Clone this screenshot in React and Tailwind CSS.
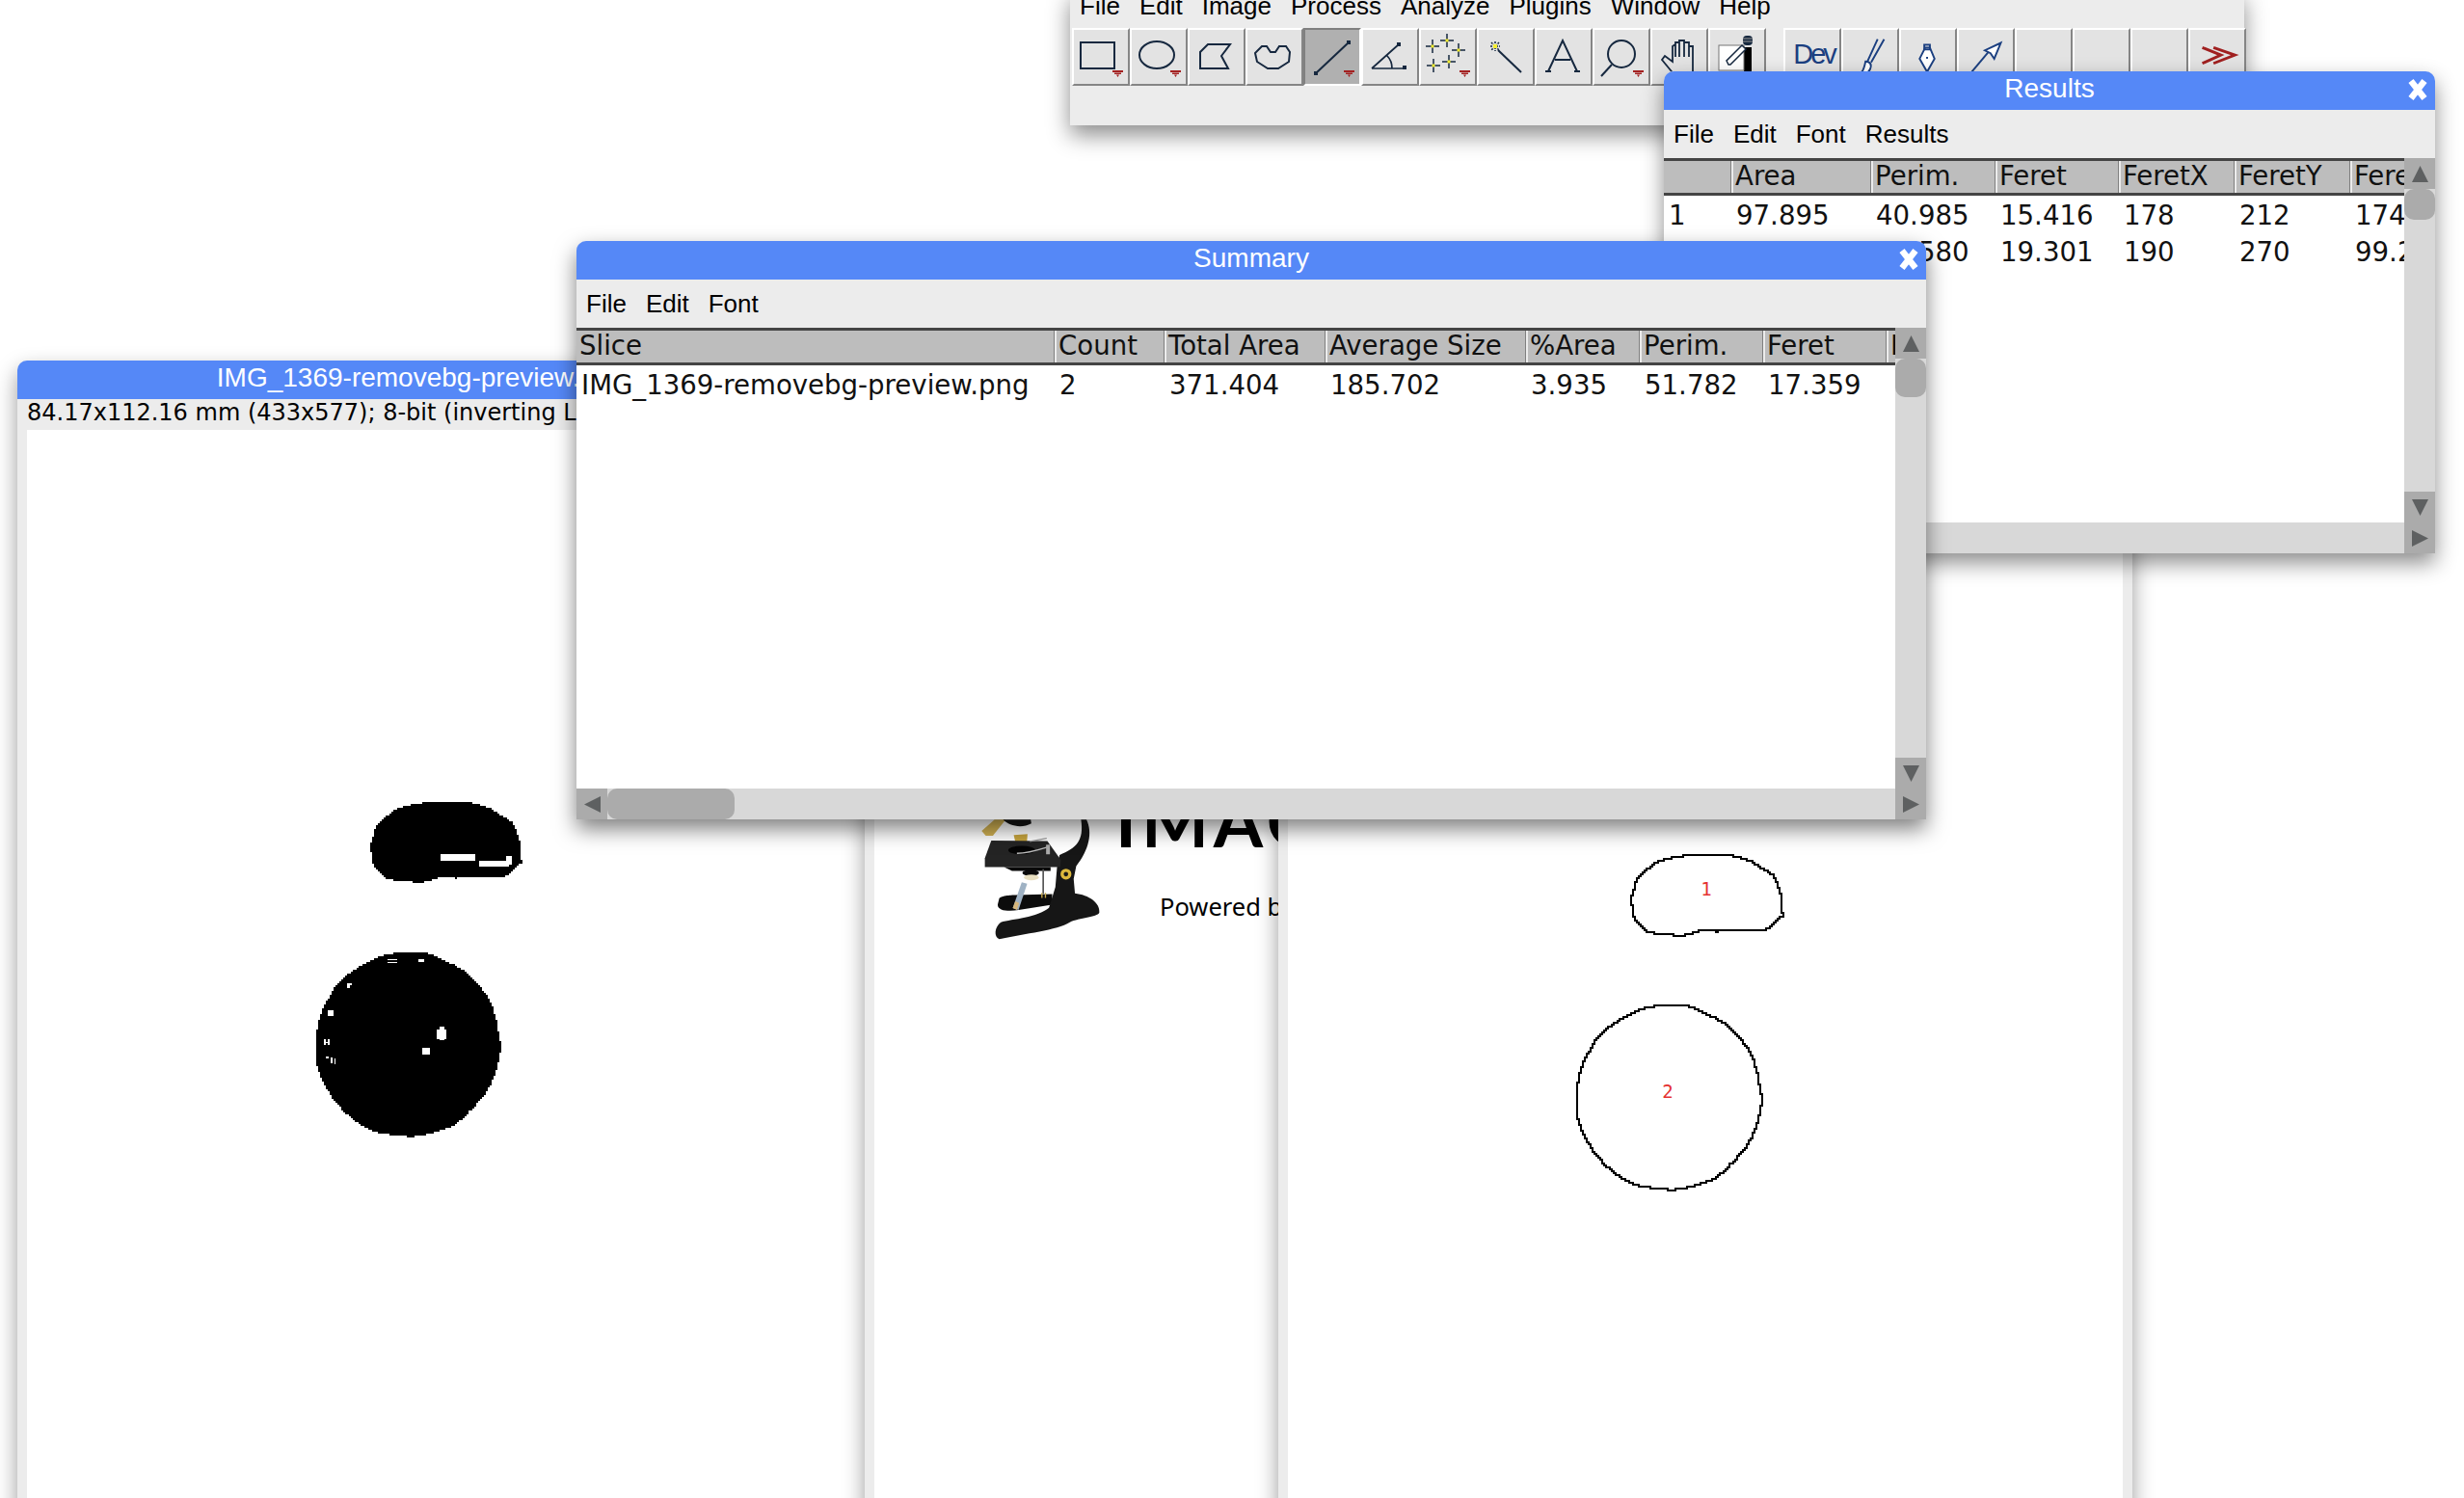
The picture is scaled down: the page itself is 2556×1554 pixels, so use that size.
const ink = "#16283f";

// turn a polygon into the stair-stepped outline of a low-res thresholded image
function stairs(pts, cell = 2) {
  let d = "";
  let px = null;
  let py = null;
  const list = [...pts, pts[0]];
  for (let i = 0; i < list.length - 1; i++) {
    const [ax, ay] = list[i];
    const [bx, by] = list[i + 1];
    const n = Math.max(1, Math.ceil(Math.hypot(bx - ax, by - ay) / cell));
    for (let s = 0; s <= n; s++) {
      const x = Math.round((ax + ((bx - ax) * s) / n) / cell) * cell;
      const y = Math.round((ay + ((by - ay) * s) / n) / cell) * cell;
      if (px === null) d += `M${x} ${y}`;
      else {
        if (x !== px) d += `H${x}`;
        if (y !== py) d += `V${y}`;
      }
      px = x;
      py = y;
    }
  }
  return d + "Z";
}

const beanPts = [
  [465, 80], [580, 80], [650, 100], [725, 150], [745, 210], [750, 272], [700, 315], [550, 318],
  [515, 314], [500, 315], [440, 332], [360, 325], [330, 320], [290, 282], [278, 215], [295, 155], [350, 105], [410, 88],
].map(([x, y]) => [263.3 + x / 3, 359 + y / 3]);

const circlePts = Array.from({ length: 96 }, (_, i) => {
  const a = (i / 96) * Math.PI * 2;
  const r = 95.8 + Math.sin(a * 7) * 0.5 + Math.sin(a * 13 + 1) * 0.5;
  return [395 + Math.cos(a) * r, 637.5 + Math.sin(a) * r];
});

const specks = [
  [470, 258, 110, 20], [590, 278, 95, 20], [675, 265, 18, 25], [305, 585, 30, 4], [305, 593, 30, 5], [402, 585, 18, 8],
  [180, 660, 8, 15], [180, 660, 15, 6], [120, 745, 18, 16], [108, 835, 6, 16], [120, 835, 6, 16], [108, 842, 16, 4],
  [115, 888, 8, 6], [130, 890, 5, 20], [140, 895, 5, 18], [460, 805, 28, 30], [468, 796, 14, 40], [415, 860, 22, 22],
].map(([x, y, w, h]) => [272 + x / 3, 354 + y / 3, w / 3, h / 3]);

function ThresholdImage() {
  return (
    <svg className="block w-[869px] h-[1000px]" viewBox="0 0 869 1000" shapeRendering="crispEdges">
      <path d={stairs(beanPts)} fill="#000" />
      <path d={stairs(circlePts)} fill="#000" />
      {specks.map(([x, y, w, h], i) => (
        <rect key={i} x={x} y={y} width={w} height={h} fill="#fff" />
      ))}
    </svg>
  );
}

function OutlineImage() {
  return (
    <svg className="block w-[866px] h-[1000px]" viewBox="0 0 866 1000">
      <path d={stairs(beanPts)} fill="none" stroke="#000" strokeWidth="2" shapeRendering="crispEdges" />
      <path d={stairs(circlePts)} fill="none" stroke="#000" strokeWidth="2" shapeRendering="crispEdges" />
      <text x="434" y="421" textAnchor="middle" dominantBaseline="central" fontFamily="DejaVu Sans Mono" fontSize="19" fill="#e53232">1</text>
      <text x="394" y="631" textAnchor="middle" dominantBaseline="central" fontFamily="DejaVu Sans Mono" fontSize="19" fill="#e53232">2</text>
    </svg>
  );
}

function Microscope() {
  return (
    <svg className="block w-[133px] h-[127px] shrink-0" viewBox="0 30 400 380">
      <path d="M80 275C90 265 130 265 130 265L245 262L245 295L140 312C110 317 75 315 75 295Z" fill="#0c0c0c" />
      <path d="M268 140C320 120 345 95 335 30L352 30C372 70 360 125 320 175L312 215L316 260C360 265 395 290 392 320C385 335 330 335 300 350C260 375 160 385 80 403C62 395 65 365 85 350C120 340 200 335 235 305L255 240L260 180Z" fill="#161616" />
      <path d="M25 65L65 30L100 30L60 80L38 80Z" fill="#d2b253" />
      <path d="M125 78L168 75L165 118L135 120Z" fill="#c7a53e" />
      <path d="M92 30C110 50 150 58 180 42L178 30Z" fill="#141414" />
      <path d="M55 95L230 97L272 155L270 178L35 178L35 150Z" fill="#242424" />
      <ellipse cx="150" cy="125" rx="42" ry="13" fill="#050505" />
      <path d="M135 135C170 135 200 125 232 115" stroke="#bdbdbd" strokeWidth="4" fill="none" />
      <path d="M175 98L228 88" stroke="#9a9a9a" strokeWidth="4" fill="none" />
      <rect x="226" y="108" width="12" height="30" fill="#aaa" />
      <path d="M95 178L240 178L240 190L120 190Z" fill="#0a0a0a" />
      <ellipse cx="178" cy="196" rx="26" ry="10" fill="#0a0a0a" />
      <ellipse cx="180" cy="210" rx="23" ry="9" fill="#e8dfc0" />
      <path d="M150 225L167 230L140 312L122 306Z" fill="#9fb2c4" />
      <path d="M122 306L130 285L142 290L135 312Z" fill="#d6b77c" />
      <path d="M217 185L217 262" stroke="#555" strokeWidth="5" />
      <path d="M213 258L213 274M224 258L224 274" stroke="#c9a94a" strokeWidth="4" />
      <circle cx="288" cy="200" r="17" fill="#dcb83c" />
      <circle cx="288" cy="200" r="7" fill="#1a1a1a" />
    </svg>
  );
}

function Arrow({ dir }) {
  const pts = {
    up: "8.5,0 17,17 0,17",
    down: "0,0 17,0 8.5,17",
    left: "17,0 17,17 0,8.5",
    right: "0,0 17,8.5 0,17",
  };
  return (
    <svg className="w-[17px] h-[17px]" viewBox="0 0 17 17">
      <polygon points={pts[dir]} fill="#5e6061" />
    </svg>
  );
}

function ScrollButton({ dir }) {
  return (
    <div className="w-8 h-8 shrink-0 bg-[#ababab] flex items-center justify-center">
      <Arrow dir={dir} />
    </div>
  );
}

function Close() {
  return (
    <svg className="absolute right-[7px] top-[6px] w-[22px] h-[26px]" viewBox="0 0 22 26">
      <path d="M4 4L18 22M18 4L4 22" stroke="#fff" strokeWidth="6.5" />
    </svg>
  );
}

function TitleBar({ title, close }) {
  return (
    <div className="relative h-10 shrink-0 bg-[#5588f7] rounded-t-[10px] flex justify-center pt-[2px] text-[28px] leading-[32px] text-white whitespace-nowrap overflow-hidden">
      {title}
      {close && <Close />}
    </div>
  );
}

function MenuBar({ items }) {
  return (
    <div className="h-[50px] shrink-0 bg-[#ececec] flex items-center gap-5 px-[10px] pt-[1px] text-[26px] text-black">
      {items.map((m) => (
        <span key={m}>{m}</span>
      ))}
    </div>
  );
}

function HeaderCell({ className, first, children }) {
  return (
    <div className={`${className} shrink-0 h-full whitespace-nowrap ${first ? "pl-[3px]" : "pl-[2px] border-l-2 border-l-[#ececec] shadow-[-1px_0_0_#808080]"}`}>
      {children}
    </div>
  );
}

function TextWindowBody({ header, rows, thumbClass, vThumbClass }) {
  return (
    <div className="flex-1 min-h-0 flex">
      <div className="flex-1 min-w-0 flex flex-col">
        <div className="flex-1 min-h-0 overflow-hidden bg-white font-['DejaVu_Sans',sans-serif] text-[27.6px] text-[#111]">
          <div className="h-[39px] flex items-center bg-[#bdbdbd] border-y-[3px] border-[#444] leading-[31px]">
            {header.map(([label, cls], i) => (
              <HeaderCell key={i} className={cls} first={i === 0}>{label}</HeaderCell>
            ))}
          </div>
          {rows.map((row, r) => (
            <div key={r} className="h-[38px] flex items-center pt-[4px] leading-[34px]">
              {row.map((v, i) => (
                <div key={i} className={`${header[i][1]} shrink-0 pl-[5px] whitespace-nowrap`}>{v}</div>
              ))}
            </div>
          ))}
        </div>
        <div className="h-8 shrink-0 flex bg-[#d8d8d8]">
          <ScrollButton dir="left" />
          <div className={`${thumbClass} h-8 bg-[#ababab] rounded-[10px]`} />
        </div>
      </div>
      <div className="w-8 shrink-0 flex flex-col bg-[#d8d8d8]">
        <ScrollButton dir="up" />
        <div className={`${vThumbClass} w-8 bg-[#ababab] rounded-[10px]`} />
        <div className="flex-1" />
        <ScrollButton dir="down" />
        <ScrollButton dir="right" />
      </div>
    </div>
  );
}

const summaryHeader = [
  ["Slice", "w-[496px]"],
  ["Count", "w-[114px]"],
  ["Total Area", "w-[167px]"],
  ["Average Size", "w-[208px]"],
  ["%Area", "w-[118px]"],
  ["Perim.", "w-[128px]"],
  ["Feret", "w-[128px]"],
  ["FeretX", "w-[120px]"],
];

const resultsHeader = [
  ["", "w-[70px]"],
  ["Area", "w-[145px]"],
  ["Perim.", "w-[129px]"],
  ["Feret", "w-[128px]"],
  ["FeretX", "w-[120px]"],
  ["FeretY", "w-[120px]"],
  ["FeretAngle", "w-[160px]"],
];

function TriMark() {
  return <path d="M43 44H54V46H43ZM45 46.500H52V48H45ZM47 48.500H50L48.500 51Z" fill="#a32020" />;
}

function Corner({ x, y }) {
  return <rect x={x - 2} y={y - 2} width="4" height="4" fill={ink} />;
}

function Star({ x, y }) {
  return (
    <g>
      <path d={`M${x - 7} ${y}H${x + 7}M${x} ${y - 7}V${y + 7}`} stroke={ink} strokeWidth="1.5" />
      <rect x={x - 1.500} y={y - 1.500} width="3" height="3" fill="#f4ee30" />
    </g>
  );
}

const stroke = { fill: "none", stroke: ink, strokeWidth: 2 };

const tools = [
  <g key="rect"><rect x="10" y="15" width="35" height="27" {...stroke} /><TriMark /></g>,
  <g key="oval"><ellipse cx="29" cy="28" rx="18" ry="14" {...stroke} /><TriMark /></g>,
  <path key="poly" d="M22 17H45L36 29L43 42H14V25Z" {...stroke} />,
  <path key="free" d="M18 19L23 19L27 25H32L36 19H43L47 25L46 35L35 42H24L13 35L11 26Z" {...stroke} />,
  <g key="line"><path d="M14 47L48 15" {...stroke} /><Corner x={14} y={47} /><Corner x={48} y={15} /><TriMark /></g>,
  <g key="angle"><path d="M12 42L40 17M12 42H46M28 29C31 32 33 36 33 42" {...stroke} strokeWidth="1.700" /><Corner x={40} y={17} /><Corner x={46} y={41} /></g>,
  <g key="points"><Star x={15} y={19} /><Star x={30} y={13} /><Star x={42} y={23} /><Star x={16} y={39} /><Star x={32} y={35} /><TriMark /></g>,
  <g key="wand"><path d="M23 23L47 46" {...stroke} /><path d="M15 19H25M20 14V24M16 15L24 23M24 15L16 23" stroke={ink} strokeWidth="1.500" strokeDasharray="2 1" /><rect x="18" y="17" width="4" height="4" fill="#f4ee30" /></g>,
  <g key="text"><path d="M15 45L30 13L45 45M22 33H38M12 45H18M42 45H48" {...stroke} /></g>,
  <g key="zoom"><circle cx="31" cy="27" r="14" {...stroke} /><path d="M21 38L10 50" {...stroke} /><TriMark /></g>,
  <path key="hand" d="M27 50L13 33L16 29L24 35V19L27 17V30V15H31V30V13H36V30V15H41V30V19H45V48" {...stroke} strokeWidth="1.800" />,
  <g key="drop"><rect x="38" y="20" width="8" height="30" fill="#000" /><rect x="12" y="18" width="26" height="26" fill="#fff" stroke="#777" strokeWidth="1" /><path d="M22 38L20 34L36 18L40 22L24 38Z" fill="#fff" stroke={ink} strokeWidth="1.500" /><rect x="37" y="8" width="10" height="10" rx="4" fill={ink} /><path d="M37 11H47M37 14H47" stroke="#999" strokeWidth="1" /></g>,
];

const tools2 = [
  <span key="dev" className="font-['Liberation_Sans',sans-serif] text-[29px] leading-none text-[#1b3f80] tracking-[-3px] pl-[3px] mb-[5px]">Dev</span>,
  <svg key="brush" className="w-[58px] h-[60px]" viewBox="0 0 58 60"><path d="M44 11L30 36M37 11L26 35" fill="none" stroke="#1b3f80" strokeWidth="2" /><path d="M24 35C29 35 31 38 29 43C27 48 22 48 20 46C22 44 23 40 24 35Z" fill="#fff" stroke="#1b3f80" strokeWidth="2" /></svg>,
  <svg key="pen" className="w-[58px] h-[60px]" viewBox="0 0 58 60"><path d="M26 20H31L36 32L28 46L20 32Z" fill="#fff" stroke="#1b3f80" strokeWidth="2" /><rect x="25" y="17" width="6" height="5" fill="none" stroke="#1b3f80" strokeWidth="2" /><rect x="27" y="30" width="2" height="2" fill="#1b3f80" /></svg>,
  <svg key="arrow" className="w-[58px] h-[60px]" viewBox="0 0 58 60"><path d="M14 46L34 22" fill="none" stroke="#1b3f80" strokeWidth="2" /><path d="M45 15L38 32L34 26L28 23Z" fill="#fff" stroke="#1b3f80" strokeWidth="2" /></svg>,
  null,
  null,
  null,
  <svg key="more" className="w-[58px] h-[60px]" viewBox="0 0 58 60"><path d="M13 20L33 28L13 37M25 20L48 28L25 37" fill="none" stroke="#a02020" strokeWidth="3" /></svg>,
];

function ToolButton({ selected, children }) {
  return (
    <div
      className={`w-[60px] h-[60px] shrink-0 flex items-center justify-center border-[2px] ${
        selected
          ? "bg-[#b0b0b0] border-t-[#808080] border-l-[#808080] border-r-white border-b-white"
          : "bg-[#e3e3e3] border-t-white border-l-white border-r-[#858585] border-b-[#858585]"
      }`}
    >
      {children}
    </div>
  );
}

function Toolbar() {
  return (
    <div className="absolute left-[1110px] -top-[10px] w-[1218px] h-[140px] z-20 bg-[#ececec] shadow-[0_10px_22px_rgba(0,0,0,0.45)] font-['Liberation_Sans',sans-serif]">
      <div className="h-[39px] flex items-center gap-5 pl-[10px] pb-[6px] text-[26px] text-black">
        {["File", "Edit", "Image", "Process", "Analyze", "Plugins", "Window", "Help"].map((m) => (
          <span key={m}>{m}</span>
        ))}
      </div>
      <div className="flex pl-[2px]">
        {tools.map((t, i) => (
          <ToolButton key={i} selected={i === 4}>
            <svg className="w-[56px] h-[56px]" viewBox="3 2 56 56">{t}</svg>
          </ToolButton>
        ))}
        <div className="w-[18px] shrink-0" />
        {tools2.map((t, i) => (
          <ToolButton key={i}>{t}</ToolButton>
        ))}
      </div>
    </div>
  );
}

export default function App() {
  return (
    <div className="relative w-[2556px] h-[1554px] overflow-hidden bg-white font-['Liberation_Sans',sans-serif]">
      {/* binary mask */}
      <div className="absolute left-[18px] top-[374px] w-[889px] h-[1300px] z-[1] bg-[#ececec] rounded-t-[10px] shadow-[0_10px_22px_rgba(0,0,0,0.4)]">
        <div className="flex justify-center h-10 bg-[#5588f7] rounded-t-[10px] pt-[2px] pr-[52px] text-[28px] leading-[32px] text-white whitespace-nowrap">
          IMG_1369-removebg-preview.png
        </div>
        <div className="h-8 pl-[10px] font-['DejaVu_Sans',sans-serif] text-[24px] leading-[29px] text-black whitespace-nowrap overflow-hidden">
          84.17x112.16 mm (433x577); 8-bit (inverting LUT); 2.0MB
        </div>
        <div className="ml-[10px] mr-[10px] h-[1300px] bg-white">
          <ThresholdImage />
        </div>
      </div>

      {/* splash behind */}
      <div className="absolute left-[897px] top-[374px] w-[500px] h-[1300px] z-[2] bg-[#ececec] rounded-t-[10px] shadow-[0_10px_22px_rgba(0,0,0,0.4)]">
        <div className="h-10 bg-[#5588f7] rounded-t-[10px]" />
        <div className="h-8" />
        <div className="ml-[10px] h-[1300px] bg-white overflow-hidden pt-[404px] pl-[103px] flex">
          <Microscope />
          <div className="ml-[14px] shrink-0">
            <div className="-mt-[36px] font-['Lato',sans-serif] font-bold text-[74px] leading-[74px] tracking-[5px] text-black whitespace-nowrap">IMAGEJ</div>
            <div className="mt-[36px] ml-[46px] font-['Noto_Sans',sans-serif] text-[25.5px] leading-[32px] text-black whitespace-nowrap">Powered by</div>
          </div>
        </div>
      </div>

      {/* outlines */}
      <div className="absolute left-[1326px] top-[429px] w-[886px] h-[1300px] z-[3] bg-[#ececec] rounded-t-[10px] shadow-[0_10px_22px_rgba(0,0,0,0.4)]">
        <div className="h-10 bg-[#5588f7] rounded-t-[10px]" />
        <div className="h-8" />
        <div className="mx-[10px] h-[1300px] bg-white">
          <OutlineImage />
        </div>
      </div>

      <Toolbar />

      {/* results */}
      <div className="absolute left-[1726px] top-[74px] w-[800px] h-[500px] z-30 flex flex-col bg-[#ececec] rounded-t-[10px] shadow-[0_10px_22px_rgba(0,0,0,0.45)]">
        <TitleBar title="Results" close />
        <MenuBar items={["File", "Edit", "Font", "Results"]} />
        <TextWindowBody
          header={resultsHeader}
          rows={[
            ["1", "97.895", "40.985", "15.416", "178", "212", "174.289"],
            ["2", "273.509", "62.580", "19.301", "190", "270", "99.246"],
          ]}
          thumbClass="w-[60px]"
          vThumbClass="h-8"
        />
      </div>

      {/* summary */}
      <div className="absolute left-[598px] top-[250px] w-[1400px] h-[600px] z-40 flex flex-col bg-[#ececec] rounded-t-[10px] shadow-[0_10px_22px_rgba(0,0,0,0.5)]">
        <TitleBar title="Summary" close />
        <MenuBar items={["File", "Edit", "Font"]} />
        <TextWindowBody
          header={summaryHeader}
          rows={[["IMG_1369-removebg-preview.png", "2", "371.404", "185.702", "3.935", "51.782", "17.359", ""]]}
          thumbClass="w-[132px]"
          vThumbClass="h-10"
        />
      </div>
    </div>
  );
}
